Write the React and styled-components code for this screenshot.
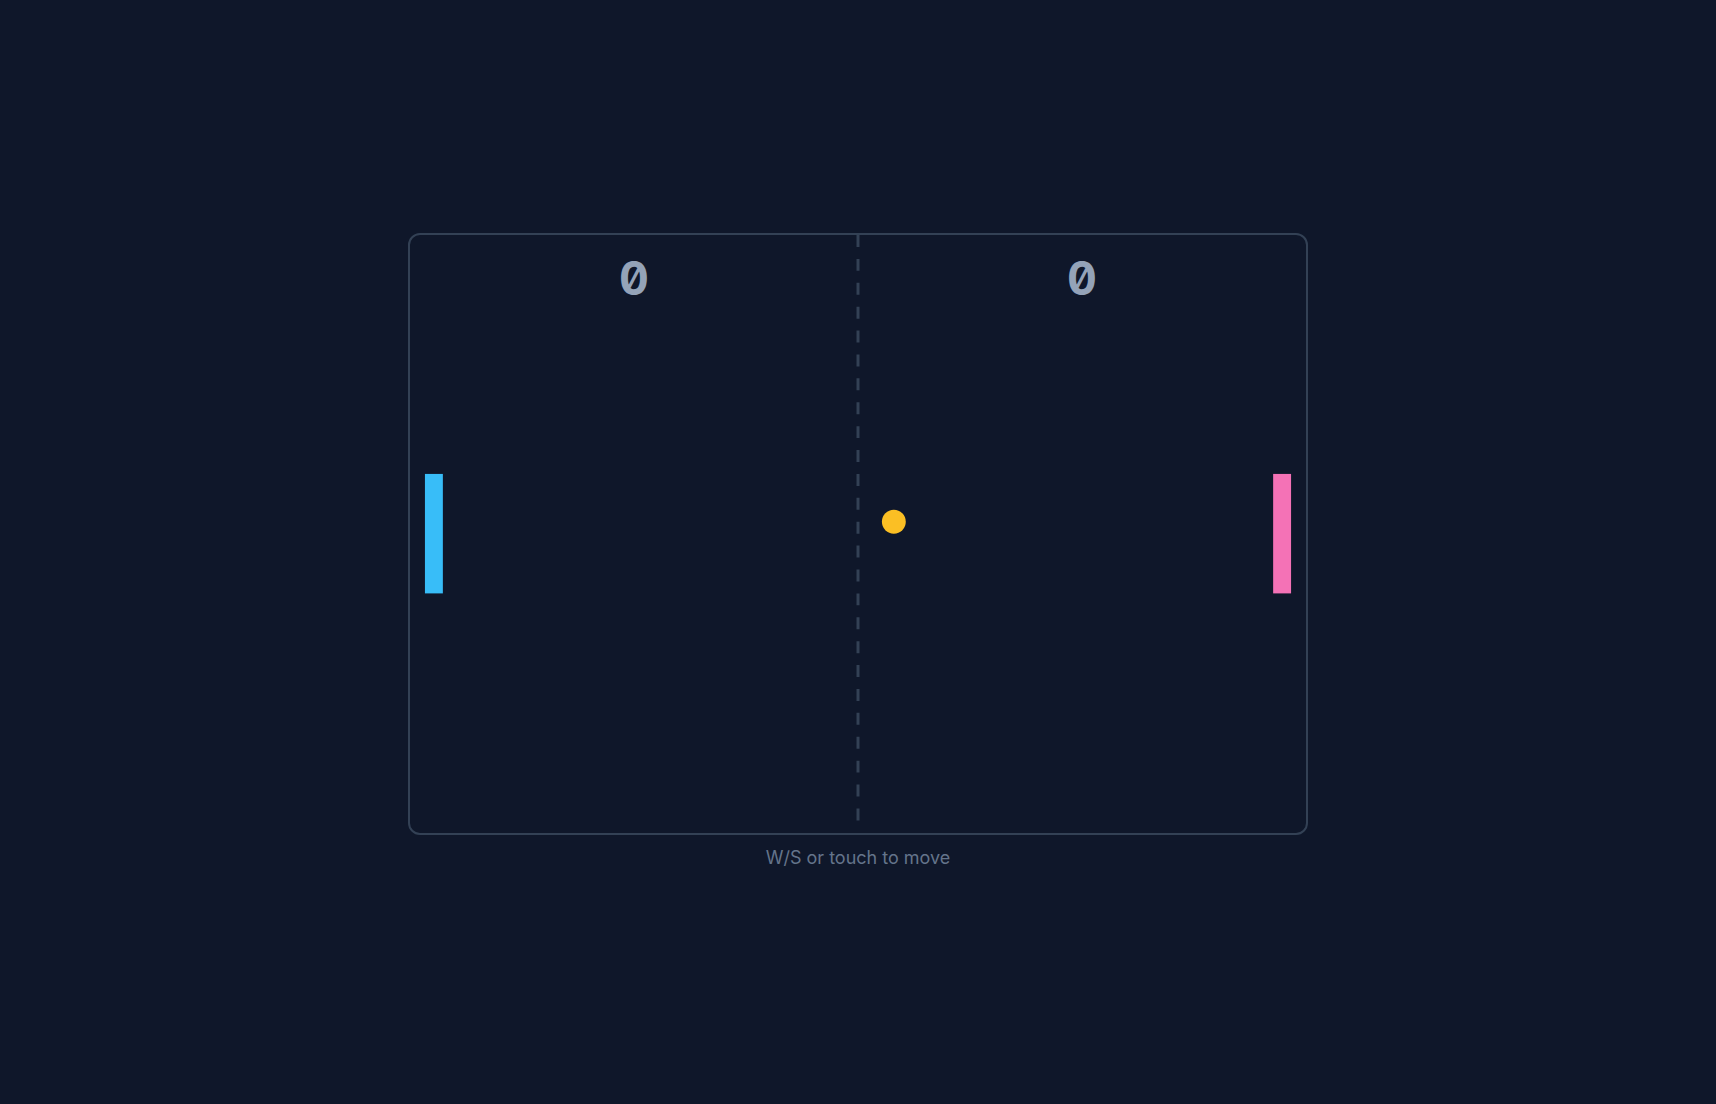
import React from "react";
import styled, { createGlobalStyle } from "styled-components";

const FIELD_W = 600;
const FIELD_H = 400;
const PADDLE_W = 12;
const PADDLE_H = 80;
const PADDLE_GAP = 10;

const GlobalStyle = createGlobalStyle`
  html, body {
    margin: 0;
    padding: 0;
    background: #0f172a;
  }
  body {
    font-family: Inter, "Noto Sans", sans-serif;
  }
`;

const Page = styled.main`
  min-height: 100vh;
  display: flex;
  flex-direction: column;
  align-items: center;
  justify-content: center;
  gap: 10px;
  background: #0f172a;
`;

const Board = styled.div`
  width: 900px;
  box-sizing: border-box;
  border: 2px solid #334155;
  border-radius: 12px;
  overflow: hidden;
  background: #0f172a;
  line-height: 0;
`;

const Field = styled.svg`
  display: block;
  width: 100%;
  height: auto;
`;

/* slashed, tabular zero so the score reads like a scoreboard digit */
const Score = styled.text`
  font-family: Inter, "DejaVu Sans Mono", monospace;
  font-size: 31px;
  font-weight: 700;
  font-feature-settings: "zero" 1, "tnum" 1;
  fill: #94a3b8;
`;

const Hint = styled.p`
  margin: 0;
  font-family: Inter, "Noto Sans", sans-serif;
  font-size: 18px;
  line-height: 26px;
  color: #64748b;
`;

const state = {
  scores: [0, 0],
  left: { y: (FIELD_H - PADDLE_H) / 2, color: "#38bdf8" },
  right: { y: (FIELD_H - PADDLE_H) / 2, color: "#f472b6" },
  ball: { x: 324, y: 192, r: 8, color: "#fbbf24" },
};

export default function App() {
  const { scores, left, right, ball } = state;
  return (
    <>
      <GlobalStyle />
      <Page>
        <Board>
          <Field viewBox={`0 0 ${FIELD_W} ${FIELD_H}`}>
            <line
              x1={FIELD_W / 2}
              y1={0}
              x2={FIELD_W / 2}
              y2={FIELD_H}
              stroke="#334155"
              strokeWidth="2"
              strokeDasharray="8 8"
            />
            <Score x={FIELD_W / 4} y={40} textAnchor="middle">
              {scores[0]}
            </Score>
            <Score x={(FIELD_W * 3) / 4} y={40} textAnchor="middle">
              {scores[1]}
            </Score>
            <rect
              x={PADDLE_GAP}
              y={left.y}
              width={PADDLE_W}
              height={PADDLE_H}
              fill={left.color}
            />
            <rect
              x={FIELD_W - PADDLE_GAP - PADDLE_W}
              y={right.y}
              width={PADDLE_W}
              height={PADDLE_H}
              fill={right.color}
            />
            <circle cx={ball.x} cy={ball.y} r={ball.r} fill={ball.color} />
          </Field>
        </Board>
        <Hint>W/S or touch to move</Hint>
      </Page>
    </>
  );
}
